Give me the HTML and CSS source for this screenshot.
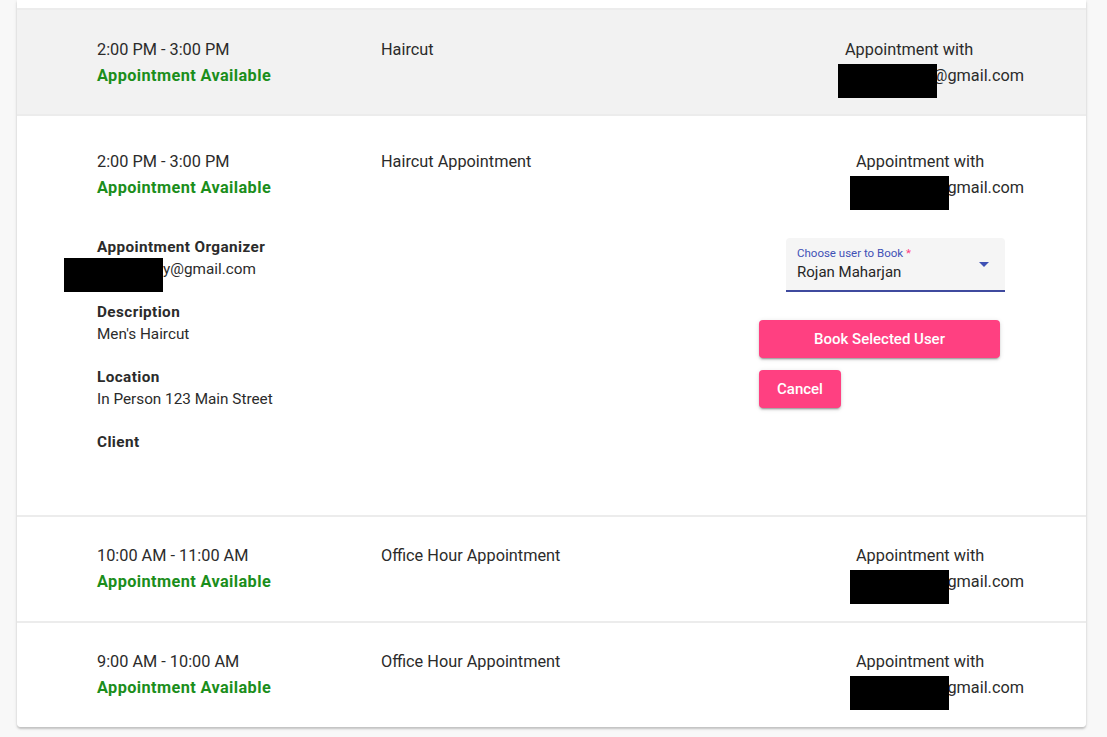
FILE: index.html
```html
<!DOCTYPE html>
<html lang="en">
<head>
<meta charset="utf-8">
<title>Appointments</title>
<link rel="stylesheet" href="styles.css">
</head>
<body>
<div class="accordion">
  <div class="panel panel-tail"></div>

  <div class="panel">
    <div class="header header-active">
      <div class="col-time">
        <div class="time">2:00 PM - 3:00 PM</div>
        <div class="status">Appointment Available</div>
      </div>
      <div class="col-title">Haircut</div>
      <div class="col-with col-with-wide">
        <div>Appointment with</div>
        <div class="email"><span class="redact"></span>@gmail.com</div>
      </div>
    </div>
  </div>

  <div class="panel">
    <div class="header header-expanded">
      <div class="col-time">
        <div class="time">2:00 PM - 3:00 PM</div>
        <div class="status">Appointment Available</div>
      </div>
      <div class="col-title">Haircut Appointment</div>
      <div class="col-with">
        <div>Appointment with</div>
        <div class="email"><span class="redact"></span>gmail.com</div>
      </div>
    </div>
    <div class="body">
      <div class="details">
        <div class="field">
          <div class="label">Appointment Organizer</div>
          <div class="value organizer"><span class="redact redact-org"></span>y@gmail.com</div>
        </div>
        <div class="field">
          <div class="label">Description</div>
          <div class="value">Men's Haircut</div>
        </div>
        <div class="field">
          <div class="label">Location</div>
          <div class="value">In Person 123 Main Street</div>
        </div>
        <div class="field">
          <div class="label">Client</div>
        </div>
      </div>
      <div class="actions">
        <div class="select">
          <div class="select-label">Choose user to Book <span class="req">*</span></div>
          <div class="select-value">Rojan Maharjan</div>
          <span class="select-arrow"></span>
        </div>
        <button class="btn btn-book">Book Selected User</button>
        <button class="btn btn-cancel">Cancel</button>
      </div>
    </div>
  </div>

  <div class="panel">
    <div class="header">
      <div class="col-time">
        <div class="time">10:00 AM - 11:00 AM</div>
        <div class="status">Appointment Available</div>
      </div>
      <div class="col-title">Office Hour Appointment</div>
      <div class="col-with">
        <div>Appointment with</div>
        <div class="email"><span class="redact"></span>gmail.com</div>
      </div>
    </div>
  </div>

  <div class="panel panel-last">
    <div class="header">
      <div class="col-time">
        <div class="time">9:00 AM - 10:00 AM</div>
        <div class="status">Appointment Available</div>
      </div>
      <div class="col-title">Office Hour Appointment</div>
      <div class="col-with">
        <div>Appointment with</div>
        <div class="email"><span class="redact"></span>gmail.com</div>
      </div>
    </div>
  </div>
</div>
</body>
</html>
```

FILE: styles.css
```css
html, body {
  margin: 0;
  padding: 0;
}

body {
  background: #f8f8f8;
  font-family: Roboto, "Liberation Sans", sans-serif;
  color: #2b2b2b;
  height: 737px;
  overflow: hidden;
}

.accordion {
  margin: 0 21px 0 17px;
  display: flex;
  flex-direction: column;
  gap: 2px;
  background: #ececec;
  box-shadow: 0 2px 2px rgba(0, 0, 0, 0.18), 0 1px 4px rgba(0, 0, 0, 0.08);
  border-radius: 0 0 4px 4px;
}

.panel {
  background: #ffffff;
}

.panel-tail {
  height: 8px;
}

.panel-last {
  border-radius: 0 0 4px 4px;
}

.header {
  display: flex;
  align-items: flex-start;
  padding: 26px 62px 26px 80px;
  font-size: 16.3px;
  line-height: 26px;
}

.header-active {
  background: #f2f2f2;
  padding-top: 27px;
  padding-bottom: 25px;
}

.header-expanded {
  padding-top: 33px;
  padding-bottom: 35px;
}

.col-time {
  width: 284px;
  flex: none;
}

.status {
  color: #1b8e1b;
  font-weight: 700;
  letter-spacing: 0.4px;
}

.col-title {
  flex: 1;
}

.col-with {
  flex: none;
  width: 168px;
}

.col-with-wide {
  width: 179px;
}

.email {
  position: relative;
  text-align: right;
}

.redact {
  position: absolute;
  left: -6px;
  top: 1px;
  width: 99px;
  height: 34px;
  background: #000000;
}

.col-with-wide .redact {
  left: -7px;
}

.body {
  display: flex;
  padding: 0 81px 41px 80px;
}

.details {
  flex: 1;
  font-size: 15.3px;
  line-height: 22px;
}

.field {
  margin-bottom: 21px;
}

.label {
  font-weight: 700;
  letter-spacing: 0.4px;
}

.value {
  position: relative;
}

.organizer {
  padding-left: 66px;
}

.redact-org {
  left: -33px;
  top: 0;
}

.actions {
  width: 246px;
  flex: none;
  display: flex;
  flex-direction: column;
  align-items: flex-start;
  padding-top: 2px;
}

.select {
  position: relative;
  box-sizing: border-box;
  width: 219px;
  height: 54px;
  margin-left: 27px;
  padding: 8px 12px 0 11px;
  background: #f5f5f5;
  border-bottom: 2px solid #3f4a9e;
  border-radius: 4px 4px 0 0;
}

.select-label {
  font-size: 11.5px;
  line-height: 14px;
  color: #3f51b5;
  margin-bottom: 2px;
}

.req {
  color: #ff4081;
}

.select-value {
  font-size: 15px;
  line-height: 20px;
  color: #262626;
}

.select-arrow {
  position: absolute;
  right: 16px;
  top: 24px;
  width: 0;
  height: 0;
  border-left: 5px solid transparent;
  border-right: 5px solid transparent;
  border-top: 5px solid #3f51b5;
}

.btn {
  font-family: Roboto, "Liberation Sans", sans-serif;
  font-size: 15px;
  font-weight: 500;
  color: #ffffff;
  background: #ff4081;
  border: none;
  border-radius: 4px;
  height: 38px;
  box-shadow: 0 3px 1px -2px rgba(0, 0, 0, 0.2), 0 2px 2px 0 rgba(0, 0, 0, 0.14), 0 1px 5px 0 rgba(0, 0, 0, 0.12);
}

.btn-book {
  width: 241px;
  margin-top: 28px;
}

.btn-cancel {
  margin-top: 12px;
  padding: 0 18px;
}
```
